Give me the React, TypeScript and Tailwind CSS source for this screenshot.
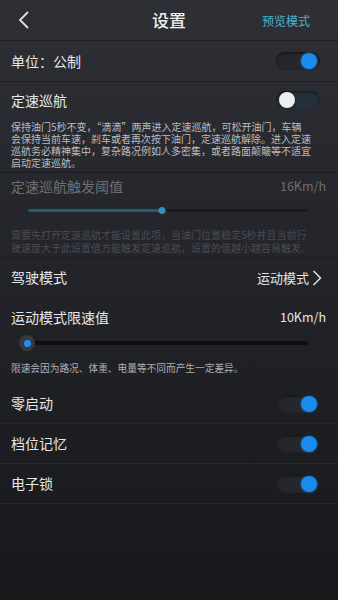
import React from "react";

const font = { fontFamily: '"Noto Sans CJK SC", "Noto Sans", sans-serif' };

function Toggle({ on }: { on: boolean }) {
  return (
    <div
      className={`relative h-[18px] w-[44px] rounded-full shadow-[inset_0_1px_3px_rgba(0,0,0,0.6)] ${
        on ? "bg-[#25272c]" : "bg-[#24313c]"
      }`}
    >
      <div
        className={`absolute top-[1px] h-[16px] w-[16px] rounded-full ${
          on
            ? "right-[3px] bg-[#1a8cf0] shadow-[0_0_3px_rgba(30,140,240,0.6)]"
            : "left-[3px] bg-[#eeeeee] shadow-[0_0_3px_rgba(0,0,0,0.5)]"
        }`}
      />
    </div>
  );
}

export default function App() {
  return (
    <div
      className="flex h-[600px] w-[338px] flex-col bg-gradient-to-b from-[#2e3035] via-[#222328] to-[#17181c] text-[#e6e6e6]"
      style={font}
    >
      {/* header */}
      <div className="relative flex h-[41px] items-center justify-center border-b border-[#1d1e22]">
        <svg className="absolute left-[17px] top-[11px]" width="14" height="18" viewBox="0 0 14 18">
          <path d="M11 1 L3 9 L11 17" fill="none" stroke="#e0e0e0" strokeWidth="1.8" />
        </svg>
        <span className="text-[17px] font-medium text-[#f0f0f0]">设置</span>
        <span className="absolute right-[28px] top-[12px] text-[12px] text-[#4db3cc]">预览模式</span>
      </div>

      {/* 单位 */}
      <div className="flex h-[41px] items-center justify-between border-b border-[#1d1e22] pl-[11px] pr-[18px]">
        <span className="text-[14px]">单位：公制</span>
        <Toggle on />
      </div>

      {/* 定速巡航 */}
      <div className="border-b border-[#1d1e22] pb-[3px] pl-[11px] pr-[18px]">
        <div className="flex h-[36px] items-center justify-between">
          <span className="text-[14px]">定速巡航</span>
          <Toggle on={false} />
        </div>
        <p className="mt-[3px] w-[300px] text-[10px] leading-[12px] text-[#bcbcc0]">
          保持油门5秒不变，“滴滴”两声进入定速巡航，可松开油门，车辆会保持当前车速，刹车或者再次按下油门，定速巡航解除。进入定速巡航务必精神集中，复杂路况例如人多密集，或者路面颠簸等不适宜启动定速巡航。
        </p>
      </div>

      {/* 触发阈值 (disabled) */}
      <div className="border-b border-[#1d1e22] pb-[3px] pl-[11px] pr-[12px]">
        <div className="flex h-[26px] items-center justify-between text-[#6d6f75]">
          <span className="text-[14px]">定速巡航触发阈值</span>
          <span className="text-[12.5px]">16Km/h</span>
        </div>
        <div className="flex h-[22px] items-center pl-[17px] pr-[18px]">
          <div className="relative h-[3px] flex-1 rounded-full bg-[#1c1c20]">
            <div className="h-[3px] w-[48%] rounded-full bg-[#1f5b7a]" />
            <div className="absolute left-[48%] top-[-2px] h-[7px] w-[7px] -translate-x-1/2 rounded-full bg-[#3a8db3]" />
          </div>
        </div>
        <p className="mt-[7px] w-[300px] text-[10px] leading-[13px] text-[#4a4c52]">
          需要先打开定速巡航才能设置此项，当油门位置稳定5秒并且当前行驶速度大于此设置值方能触发定速巡航，设置的值越小越容易触发。
        </p>
      </div>

      {/* 驾驶模式 */}
      <div className="flex h-[40px] items-center justify-between border-b border-[#1d1e22] pl-[11px] pr-[16px]">
        <span className="text-[14px]">驾驶模式</span>
        <span className="flex items-center gap-[3px] text-[13px]">
          运动模式
          <svg width="10" height="18" viewBox="0 0 10 18">
            <path d="M1.5 2 L8.5 9 L1.5 16" fill="none" stroke="#e0e0e0" strokeWidth="1.5" />
          </svg>
        </span>
      </div>

      {/* 运动模式限速值 */}
      <div className="border-b border-[#1d1e22] pb-[9px] pl-[11px] pr-[12px]">
        <div className="flex h-[38px] items-center justify-between">
          <span className="text-[14px]">运动模式限速值</span>
          <span className="text-[12.5px]">10Km/h</span>
        </div>
        <div className="flex h-[14px] items-center pl-[16px] pr-[18px]">
          <div className="relative h-[4px] flex-1 rounded-full bg-[#0e0f12]">
            <div className="absolute left-[-8px] top-[-6px] flex h-[16px] w-[16px] items-center justify-center rounded-full bg-[#363940]">
              <div className="h-[7px] w-[7px] rounded-full bg-[#1e8ff5]" />
            </div>
          </div>
        </div>
        <p className="mt-[12px] text-[9.7px] leading-[12px] text-[#b0b0b4]">
          限速会因为路况、体重、电量等不同而产生一定差异。
        </p>
      </div>

      {/* toggles */}
      {["零启动", "档位记忆", "电子锁"].map((t) => (
        <div
          key={t}
          className="flex h-[40px] items-center justify-between border-b border-[#26272c] pl-[11px] pr-[18px]"
        >
          <span className="text-[14px]">{t}</span>
          <Toggle on />
        </div>
      ))}
    </div>
  );
}
